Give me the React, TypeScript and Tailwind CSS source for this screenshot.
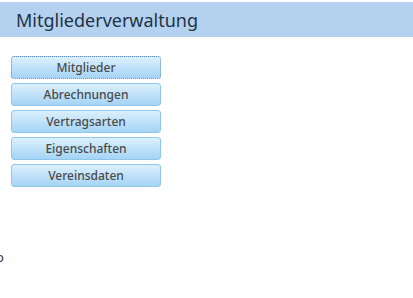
const items = ['Mitglieder', 'Abrechnungen', 'Vertragsarten', 'Eigenschaften', 'Vereinsdaten'];

export default function App() {
  return (
    <div className="w-[413px] h-[298px] bg-white overflow-hidden" style={{ fontFamily: '"Noto Sans", "Open Sans", sans-serif' }}>
      <div className="mt-[2px] h-[35px] bg-[#b4d2ef] flex items-center pl-[16px]">
        <h1 className="text-[18px] text-[#1e3346] leading-none">Mitgliederverwaltung</h1>
      </div>
      <div className="mt-[19px] ml-[11px] flex flex-col gap-[4px] w-[150px]">
        {items.map((label, i) => (
          <button
            key={label}
            className={`h-[23px] rounded-[3px] bg-gradient-to-b from-[#dcf0fd] to-[#a4d4f5] text-[12px] font-medium text-[#4a4a4a] leading-none ${
              i === 0 ? 'border border-dotted border-[#5f8fb4]' : 'border border-[#8fc6eb]'
            }`}
          >
            {label}
          </button>
        ))}
      </div>
      <div className="mt-[64px] -ml-[4px] text-[13px] text-[#333] leading-none">o</div>
    </div>
  );
}
